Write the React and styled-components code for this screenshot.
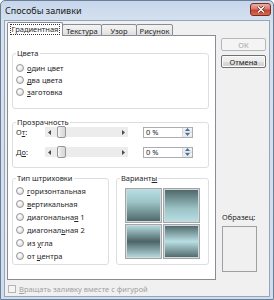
import React from "react";
import styled, { createGlobalStyle } from "styled-components";

const GlobalStyle = createGlobalStyle`
  html, body { margin: 0; padding: 0; background: #ffffff; }
  body {
    font-family: "Noto Sans", "DejaVu Sans", sans-serif;
    font-size: 7.5px;
    color: #262626;
  }
  * { box-sizing: border-box; }
`;

const Window = styled.div`
  width: 274px;
  height: 300px;
  display: flex;
  flex-direction: column;
  padding: 0 3px 2px;
  border: 1px solid #6c7e96;
  border-radius: 5px 5px 0 0;
  background: linear-gradient(#c6d6eb, #d6e2f0 22px, #d0ddee);
`;

const TitleBar = styled.div`
  height: 19px;
  display: flex;
  align-items: center;
  justify-content: space-between;
`;

const Title = styled.span`
  font-size: 9px;
  color: #1a1a1a;
  padding-left: 1px;
`;

const CloseButton = styled.div`
  width: 21px;
  height: 13px;
  margin: -3px -1px 0 0;
  border: 1px solid #7a2b1f;
  border-radius: 3px;
  background: linear-gradient(#eab0a3, #d8786a 45%, #c4442f 55%, #d66a55);
  display: flex;
  align-items: center;
  justify-content: center;
`;

const Client = styled.div`
  flex: 1;
  display: flex;
  flex-direction: column;
  background: #f0f0f0;
  border: 1px solid #94a6be;
`;

const Main = styled.div`
  display: flex;
  padding: 1px 0 0 2px;
`;

const TabsArea = styled.div`
  width: 209px;
  display: flex;
  flex-direction: column;
`;

const TabStrip = styled.div`
  height: 14px;
  display: flex;
  align-items: flex-end;
`;

const Tab = styled.div`
  width: ${(p) => p.$w}px;
  height: ${(p) => (p.$active ? 14 : 12)}px;
  margin-left: ${(p) => (p.$first ? 0 : -1)}px;
  display: flex;
  align-items: center;
  justify-content: center;
  border: 1px solid #898c95;
  border-bottom: ${(p) => (p.$active ? "none" : "1px solid #898c95")};
  border-radius: 2px 2px 0 0;
  background: ${(p) =>
    p.$active ? "#ffffff" : "linear-gradient(#f3f3f3, #ebebeb 50%, #dedede)"};
  padding-top: ${(p) => (p.$active ? 0 : 1)}px;
  white-space: nowrap;
`;

const FocusText = styled.span`
  outline: 1px dotted #333;
  padding: 0 1px;
  line-height: 9px;
`;

const TabFiller = styled.div`
  flex: 1;
  border-bottom: 1px solid #898c95;
`;

const Panel = styled.div`
  height: 244px;
  border: 1px solid #898c95;
  border-top: none;
  background: #ffffff;
  padding: 0 6px 0 4px;
  display: flex;
  flex-direction: column;
`;

const Group = styled.fieldset`
  margin: ${(p) => p.$mt}px 0 0;
  padding: ${(p) => p.$pt}px 2px 0;
  border: 1px solid #dcdfe2;
  border-radius: 3px;
  min-width: 0;
  width: ${(p) => (p.$w ? `${p.$w}px` : "auto")};
  height: ${(p) => p.$h}px;
  display: flex;
  flex-direction: column;
`;

const Legend = styled.legend`
  padding: 0 1px;
  margin-left: 1px;
  line-height: 10px;
  height: 10px;
`;

const Acc = styled.u`
  text-decoration: underline;
  text-underline-offset: 1px;
`;

const RadioRow = styled.div`
  height: ${(p) => p.$h}px;
  display: flex;
  align-items: center;
  gap: 3px;
  padding-left: 1px;
`;

const RadioDot = styled.span`
  width: 8px;
  height: 8px;
  border-radius: 50%;
  border: 1px solid #979797;
  background: radial-gradient(circle at 40% 35%, #ffffff 0, #e8e8e8 55%, #d0d0d0 100%);
  flex-shrink: 0;
`;

const SliderRow = styled.div`
  height: 10px;
  display: flex;
  align-items: center;
  margin-bottom: ${(p) => p.$mb}px;
`;

const SliderLabel = styled.span`
  width: 30px;
  padding-left: 1px;
`;

const Scroll = styled.div`
  width: 83px;
  height: 10px;
  display: flex;
  align-items: center;
  background: #ececec;
`;

const ScrollArrow = styled.div`
  width: 9px;
  height: 10px;
  display: flex;
  align-items: center;
  justify-content: center;
`;

const ScrollTrack = styled.div`
  flex: 1;
  height: 10px;
  display: flex;
  align-items: center;
`;

const Thumb = styled.div`
  width: 9px;
  height: 12px;
  margin-left: 3px;
  border: 1px solid #979797;
  border-radius: 2px;
  background: linear-gradient(to right, #f6f6f6, #e2e2e2 50%, #d6d6d6);
  flex-shrink: 0;
`;

const Spin = styled.div`
  width: 50px;
  height: 11px;
  margin-left: 15px;
  display: flex;
  border: 1px solid #abadb3;
  background: #ffffff;
`;

const SpinText = styled.span`
  flex: 1;
  padding-left: 2px;
  line-height: 9px;
`;

const SpinButtons = styled.div`
  width: 10px;
  display: flex;
  flex-direction: column;
  border-left: 1px solid #d6dbe0;
`;

const SpinButton = styled.div`
  flex: 1;
  display: flex;
  align-items: center;
  justify-content: center;
  background: linear-gradient(#f4f6f8, #e2e7ec);
  border-bottom: ${(p) => (p.$top ? "1px solid #d6dbe0" : "none")};
`;

const BottomGroups = styled.div`
  display: flex;
  gap: 7px;
  margin-top: 5px;
`;

const SwatchGrid = styled.div`
  align-self: center;
  display: grid;
  grid-template-columns: 37px 37px;
  grid-template-rows: 35px 35px;
  gap: 1px;
  margin-left: -1px;
`;

const Swatch = styled.div`
  border: 1px solid #a1a6ab;
  box-shadow: inset 0 0 0 1px #d4d8db;
  background: ${(p) => p.$bg};
`;

const Side = styled.div`
  width: 45px;
  margin-left: 5px;
  padding: 16px 0 8px;
  display: flex;
  flex-direction: column;
`;

const Button = styled.div`
  height: 13px;
  margin-bottom: 4px;
  display: flex;
  align-items: center;
  justify-content: center;
  border: 1px solid ${(p) => (p.$disabled ? "#b5b8ba" : "#707070")};
  border-radius: 2px;
  color: ${(p) => (p.$disabled ? "#a3a3a3" : "#1e1e1e")};
  background: ${(p) =>
    p.$disabled ? "#f4f4f4" : "linear-gradient(#f2f2f2, #ebebeb 50%, #dddddd 51%, #cfcfcf)"};
  box-shadow: inset 0 0 0 1px ${(p) => (p.$disabled ? "#f4f4f4" : "#fbfbfb")};
`;

const PreviewLabel = styled.div`
  margin-top: auto;
  margin-bottom: 4px;
  padding-left: 1px;
  line-height: 9px;
`;

const PreviewBox = styled.div`
  width: 35px;
  height: 46px;
  margin-left: 1px;
  border: 1px solid #a0a0a0;
  background: #f0f0f0;
`;

const CheckRow = styled.div`
  flex: 1;
  display: flex;
  align-items: center;
  gap: 3px;
  padding: 1px 0 0 3px;
  color: #a0a0a0;
`;

const CheckBox = styled.span`
  width: 8px;
  height: 8px;
  border: 1px solid #b4b4b4;
  background: #f4f4f4;
`;

const light = "#b8dfe3";
const dark = "#4c6466";

const swatches = [
  `linear-gradient(${light} 0%, #9cc3c6 40%, ${dark} 100%)`,
  `linear-gradient(${dark} 0%, #9cc3c6 60%, ${light} 100%)`,
  `linear-gradient(${light} 0%, ${dark} 50%, ${light} 100%)`,
  `linear-gradient(${dark} 0%, ${light} 50%, ${dark} 100%)`,
];

function Radio({ h, children }) {
  return (
    <RadioRow $h={h}>
      <RadioDot />
      <span>{children}</span>
    </RadioRow>
  );
}

function Arrow({ dir }) {
  const d = dir === "left" ? "M3 0 L0 2.5 L3 5 Z" : "M0 0 L3 2.5 L0 5 Z";
  return (
    <svg width="3" height="5" viewBox="0 0 3 5">
      <path d={d} fill="#4a4a4a" />
    </svg>
  );
}

function SpinArrow({ up }) {
  return (
    <svg width="5" height="3" viewBox="0 0 5 3">
      <path d={up ? "M0 3 L2.5 0 L5 3 Z" : "M0 0 L2.5 3 L5 0 Z"} fill="#4e6f8f" />
    </svg>
  );
}

function Transparency({ label, mb }) {
  return (
    <SliderRow $mb={mb}>
      <SliderLabel>{label}</SliderLabel>
      <Scroll>
        <ScrollArrow>
          <Arrow dir="left" />
        </ScrollArrow>
        <ScrollTrack>
          <Thumb />
        </ScrollTrack>
        <ScrollArrow>
          <Arrow dir="right" />
        </ScrollArrow>
      </Scroll>
      <Spin>
        <SpinText>0 %</SpinText>
        <SpinButtons>
          <SpinButton $top>
            <SpinArrow up />
          </SpinButton>
          <SpinButton>
            <SpinArrow />
          </SpinButton>
        </SpinButtons>
      </Spin>
    </SliderRow>
  );
}

export default function App() {
  return (
    <>
      <GlobalStyle />
      <Window>
        <TitleBar>
          <Title>Способы заливки</Title>
          <CloseButton>
            <svg width="8" height="7" viewBox="0 0 8 7">
              <path d="M1 0.5 L7 6.5 M7 0.5 L1 6.5" stroke="#5a1a10" strokeWidth="2.6" />
              <path d="M1 0.5 L7 6.5 M7 0.5 L1 6.5" stroke="#ffffff" strokeWidth="1.5" />
            </svg>
          </CloseButton>
        </TitleBar>
        <Client>
          <Main>
            <TabsArea>
              <TabStrip>
                <Tab $active $first $w={56}>
                  <FocusText>Градиентная</FocusText>
                </Tab>
                <Tab $w={40}>Текстура</Tab>
                <Tab $w={36}>Узор</Tab>
                <Tab $w={37}>Рисунок</Tab>
                <TabFiller />
              </TabStrip>
              <Panel>
                <Group $mt={12} $pt={4} $h={61}>
                  <Legend>Цвета</Legend>
                  <Radio h={12}>
                    <Acc>о</Acc>дин цвет
                  </Radio>
                  <Radio h={12}>
                    <Acc>д</Acc>ва цвета
                  </Radio>
                  <Radio h={12}>
                    <Acc>з</Acc>аготовка
                  </Radio>
                </Group>
                <Group $mt={8} $pt={0} $h={51}>
                  <Legend>Прозрачность</Legend>
                  <Transparency
                    mb={10}
                    label={
                      <>
                        О<Acc>т</Acc>:
                      </>
                    }
                  />
                  <Transparency
                    mb={0}
                    label={
                      <>
                        Д<Acc>о</Acc>:
                      </>
                    }
                  />
                </Group>
                <BottomGroups>
                  <Group $mt={0} $pt={1} $h={92} $w={97}>
                    <Legend>Тип штриховки</Legend>
                    <Radio h={13}>
                      <Acc>г</Acc>оризонтальная
                    </Radio>
                    <Radio h={13}>
                      <Acc>в</Acc>ертикальная
                    </Radio>
                    <Radio h={13}>
                      диагональна<Acc>я</Acc> 1
                    </Radio>
                    <Radio h={13}>
                      диагонал<Acc>ь</Acc>ная 2
                    </Radio>
                    <Radio h={13}>
                      из <Acc>у</Acc>гла
                    </Radio>
                    <Radio h={13}>
                      от <Acc>ц</Acc>ентра
                    </Radio>
                  </Group>
                  <Group $mt={0} $pt={5} $h={92} $w={93}>
                    <Legend>
                      Вариант<Acc>ы</Acc>
                    </Legend>
                    <SwatchGrid>
                      {swatches.map((bg, i) => (
                        <Swatch key={i} $bg={bg} />
                      ))}
                    </SwatchGrid>
                  </Group>
                </BottomGroups>
              </Panel>
            </TabsArea>
            <Side>
              <Button $disabled>ОК</Button>
              <Button>Отмена</Button>
              <PreviewLabel>Образец:</PreviewLabel>
              <PreviewBox />
            </Side>
          </Main>
          <CheckRow>
            <CheckBox />
            <span>
              <Acc>В</Acc>ращать заливку вместе с фигурой
            </span>
          </CheckRow>
        </Client>
      </Window>
    </>
  );
}
